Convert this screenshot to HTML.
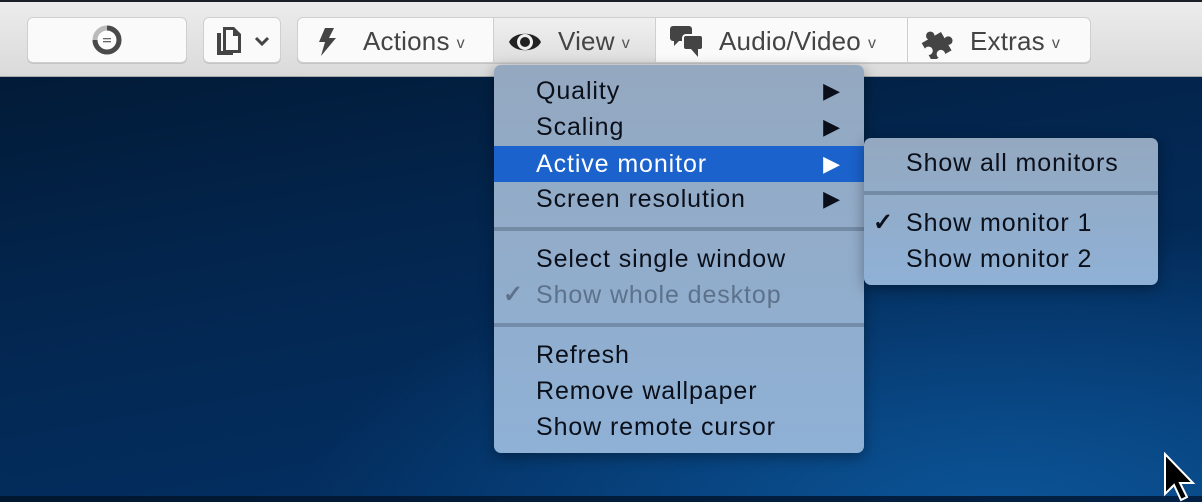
<!DOCTYPE html>
<html><head><meta charset="utf-8"><style>
*{margin:0;padding:0;box-sizing:border-box}
body{width:1202px;height:496px;overflow:hidden;position:relative;font-family:"Liberation Sans",Arial,sans-serif;
background:radial-gradient(ellipse 700px 300px at 1000px 520px,#0c5598 0%,rgba(12,85,152,0) 100%),linear-gradient(170deg,#021730 0%,#03264f 45%,#03336a 100%);}
.bar{position:absolute;left:0;top:2px;width:1202px;height:75px;background:linear-gradient(#ececec,#dadada);border-bottom:1px solid #a9a9a9}
.top{position:absolute;left:0;top:0;width:1202px;height:2px;background:#1a1f28}
.btn{position:absolute;top:17px;height:46px;background:#fafafa;border:1px solid #cfcfcf;border-radius:6px;box-shadow:0 1px 0 #c4c4c4}
.seg{position:absolute;top:0;height:44px;display:flex;align-items:center;color:#444;font-size:26px;letter-spacing:0.2px;padding-top:3px}
.car{font-size:16px;margin-left:7px;color:#555;margin-top:4px}
.menu{position:absolute;background:linear-gradient(#94a8c0,#8fb1d6);border-radius:7px;box-shadow:0 4px 14px rgba(0,0,0,.35)}
.it{position:absolute;left:0;right:0;height:36px;line-height:36px;font-size:25px;letter-spacing:0.9px;color:#0a0f1a;padding-left:42px}
.ar{position:absolute;right:23px;top:0;font-size:22px}
.ck{position:absolute;left:9px;font-weight:bold;font-size:24px}
.sep{position:absolute;left:0;right:0;height:4px;background:rgba(80,100,125,.45)}
</style></head><body>
<div class="top"></div>
<div class="bar">
<div class="btn" style="left:27px;width:160px;top:15px">
 <svg style="position:absolute;left:63px;top:6px" width="32" height="32" viewBox="0 0 32 32"><circle cx="16" cy="16" r="12" fill="none" stroke="#bbb" stroke-width="5"/><path d="M16 4 A12 12 0 1 1 4 16" fill="none" stroke="#4a4a4a" stroke-width="5"/><circle cx="16" cy="16" r="9" fill="#fff"/><rect x="12" y="14" width="8" height="1.3" fill="#666"/><rect x="12" y="17" width="8" height="1.3" fill="#666"/></svg>
</div>
<div class="btn" style="left:203px;width:78px;top:15px">
 <svg style="position:absolute;left:10px;top:7px" width="32" height="32" viewBox="0 0 32 32"><path d="M3 8h4v18h12v4H3z" fill="#444"/><path d="M9 2h11l7 7v19H9z" fill="#444"/><path d="M12 5h7v6h5v14H12z" fill="#fafafa"/></svg>
 <svg style="position:absolute;left:50px;top:18px" width="16" height="10" viewBox="0 0 16 10"><path d="M2 2l6 6 6-6" fill="none" stroke="#444" stroke-width="3"/></svg>
</div>
<div class="btn" style="left:297px;width:794px;top:15px;overflow:hidden">
 <div class="seg" style="left:0;width:195px;padding-left:18px"><svg width="22" height="30" viewBox="0 0 22 30" style="margin-right:25px"><path d="M9 1h9l-5 10h7L5 29l4-14H3z" fill="#444"/></svg>Actions<span class="car">v</span></div>
 <div class="seg" style="left:195px;width:163px;padding-left:14px;background:linear-gradient(#f0f0f0,#dedede);border-left:1px solid #cfcfcf;border-right:1px solid #cfcfcf"><svg width="34" height="26" viewBox="0 0 34 26" style="margin-right:16px"><path d="M1 13C6 2 28 2 33 13C28 24 6 24 1 13z" fill="#222"/><circle cx="17" cy="13" r="8" fill="#f0f0f0"/><circle cx="17" cy="13" r="5" fill="#222"/></svg>View<span class="car">v</span></div>
 <div class="seg" style="left:358px;width:252px;padding-left:13px;border-right:1px solid #cfcfcf"><svg width="36" height="34" viewBox="0 0 36 34" style="margin-right:14px"><rect x="1" y="1" width="22" height="15" rx="3" fill="#444"/><path d="M5 14v7l6-6z" fill="#444"/><rect x="14" y="10" width="20" height="15" rx="3" fill="#444" stroke="#fafafa" stroke-width="2"/><path d="M29 23v9l-7-8z" fill="#444"/></svg>Audio/Video<span class="car">v</span></div>
 <div class="seg" style="left:610px;width:184px;padding-left:12px"><svg width="36" height="34" viewBox="0 0 34 32" style="margin-right:14px"><path d="M4 10h7a4 4 0 1 1 7 0h7v7a4 4 0 1 1 0 7v6h-7a4 4 0 1 0-7 0H4v-7a4 4 0 1 0 0-7z" fill="#444" transform="rotate(-30 16 18)"/></svg>Extras<span class="car">v</span></div>
</div>
</div>

<div class="menu" style="left:494px;top:65px;width:370px;height:388px">
 <div class="it" style="top:8px">Quality<span class="ar">▶</span></div>
 <div class="it" style="top:44px">Scaling<span class="ar">▶</span></div>
 <div class="it" style="top:81px;background:#1b62cc;color:#fff">Active monitor<span class="ar">▶</span></div>
 <div class="it" style="top:116px">Screen resolution<span class="ar">▶</span></div>
 <div class="sep" style="top:162px"></div>
 <div class="it" style="top:176px">Select single window</div>
 <div class="it" style="top:212px;color:#5d718a"><span class="ck">✓</span>Show whole desktop</div>
 <div class="sep" style="top:258px"></div>
 <div class="it" style="top:272px">Refresh</div>
 <div class="it" style="top:308px">Remove wallpaper</div>
 <div class="it" style="top:344px">Show remote cursor</div>
</div>

<div class="menu" style="left:864px;top:138px;width:294px;height:147px">
 <div class="it" style="top:7px">Show all monitors</div>
 <div class="sep" style="top:53px"></div>
 <div class="it" style="top:67px"><span class="ck">✓</span>Show monitor 1</div>
 <div class="it" style="top:103px">Show monitor 2</div>
</div>

<svg style="position:absolute;left:1163px;top:452px" width="40" height="50" viewBox="0 0 40 50"><path d="M2 2v40l9-9 7 15 6-3-7-14h13z" fill="#000" stroke="#fff" stroke-width="2"/></svg>
</body></html>
